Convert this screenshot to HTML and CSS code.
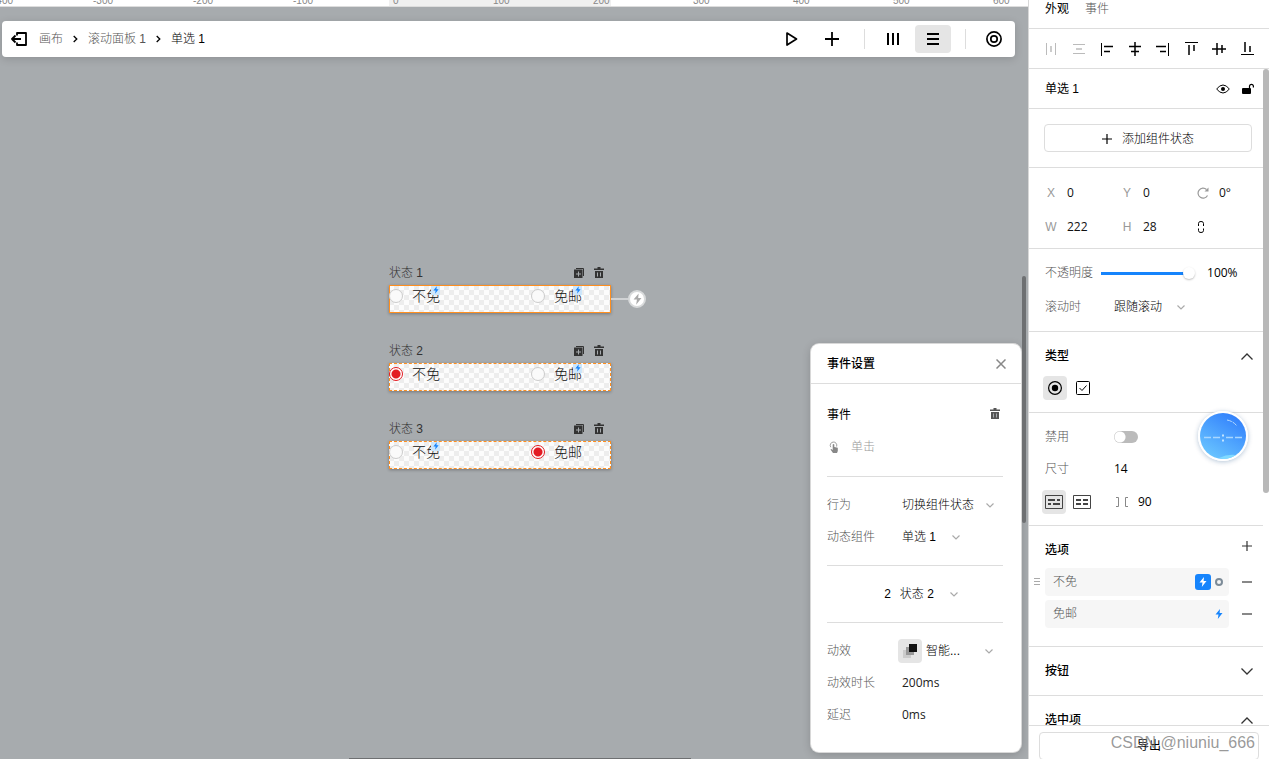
FILE: index.html
```html
<!DOCTYPE html>
<html lang="zh-CN">
<head>
<meta charset="utf-8">
<title>单选 1</title>
<link rel="stylesheet" href="styles.css">
</head>
<body>
<svg class="symbols" aria-hidden="true">
  <symbol id="chev" viewBox="0 0 8 5"><path d="M.5.5 4 4 7.500.5" fill="none" stroke="currentColor" stroke-width="1.200"/></symbol>
  <symbol id="fold" viewBox="0 0 12 7"><path d="M.5.5 6 6 11.500.5" fill="none" stroke="currentColor" stroke-width="1.300"/></symbol>
  <symbol id="bolt" viewBox="0 0 8 10"><path d="M5 0 .5 5.500H3.500L2.800 10 7.500 4H4.600Z" fill="currentColor"/></symbol>
  <symbol id="plus" viewBox="0 0 10 10"><path d="M5 0V10M0 5H10" fill="none" stroke="currentColor" stroke-width="1.200"/></symbol>
  <symbol id="trash" viewBox="0 0 10 12"><path d="M0 1.500H3.500V0H6.500V1.500H10V3H0ZM1 4H9V11H1Z" fill="currentColor"/><path class="slot" d="M3.500 5.500V9.500M6.500 5.500V9.500" fill="none"/></symbol>
  <symbol id="copy" viewBox="0 0 10 10"><path d="M2 .5H9.500V8" fill="none" stroke="currentColor"/><path d="M0 1.500H8.500V10H0Z" fill="currentColor"/><path class="slot" d="M4.500 3.500V8.500M2 6H7" fill="none"/></symbol>
  <symbol id="crumb" viewBox="0 0 5 8"><path d="M.7 1 3.800 4 .7 7" fill="none" stroke="currentColor" stroke-width="1.300"/></symbol>
</svg>

<main class="workspace">
  <div class="ruler">
    <span>-400</span><span>-300</span><span>-200</span><span>-100</span><span>0</span><span>100</span><span>200</span><span>300</span><span>400</span><span>500</span><span>600</span>
  </div>

  <header class="toolbar">
    <button class="tool exit" aria-label="退出"><svg width="16" height="14" viewBox="0 0 16 14"><path d="M6 3.500V1H15V13H6V10.500M1 7H10M4.500 3.500 1 7 4.500 10.500" fill="none" stroke="currentColor" stroke-width="1.800" stroke-linejoin="round"/></svg></button>
    <nav class="crumbs">
      <a href="#">画布</a><svg width="5" height="8"><use href="#crumb"/></svg>
      <a href="#">滚动面板 1</a><svg width="5" height="8"><use href="#crumb"/></svg>
      <a href="#" class="here">单选 1</a>
    </nav>
    <div class="tools">
      <button class="tool" aria-label="播放"><svg width="14" height="16" viewBox="0 0 14 16"><path d="M2 2 11.500 8 2 14Z" fill="none" stroke="currentColor" stroke-width="1.700" stroke-linejoin="round"/></svg></button>
      <button class="tool" aria-label="添加"><svg width="14" height="14" viewBox="0 0 14 14"><path d="M7 0V14M0 7H14" stroke="currentColor" stroke-width="1.800"/></svg></button>
      <i class="divider"></i>
      <button class="tool" aria-label="横向排列"><svg width="14" height="14" viewBox="0 0 14 14"><path d="M2 1V13M7 1V13M12 1V13" stroke="currentColor" stroke-width="2"/></svg></button>
      <button class="tool active" aria-label="纵向排列"><svg width="14" height="14" viewBox="0 0 14 14"><path d="M1 2H13M1 7H13M1 12H13" stroke="currentColor" stroke-width="2"/></svg></button>
      <i class="divider"></i>
      <button class="tool last" aria-label="定位"><svg width="16" height="16" viewBox="0 0 16 16" fill="none" stroke="currentColor"><circle cx="8" cy="8" r="7.100" stroke-width="1.700"/><circle cx="8" cy="8" r="3.200" stroke-width="1.700"/></svg></button>
    </div>
  </header>

  <section class="board board-1 selected">
    <div class="board-head"><span>状态 1</span><button aria-label="复制"><svg width="10" height="10"><use href="#copy"/></svg></button><button aria-label="删除"><svg width="10" height="12"><use href="#trash"/></svg></button></div>
    <div class="frame">
      <label class="choice"><input type="radio" name="s1">不免<i class="badge"><svg width="6" height="8"><use href="#bolt"/></svg></i></label>
      <label class="choice"><input type="radio" name="s1">免邮<i class="badge"><svg width="6" height="8"><use href="#bolt"/></svg></i></label>
    </div>
    <div class="link"><i></i><button aria-label="添加事件"><svg width="9" height="12"><use href="#bolt"/></svg></button></div>
  </section>
  <section class="board board-2">
    <div class="board-head"><span>状态 2</span><button aria-label="复制"><svg width="10" height="10"><use href="#copy"/></svg></button><button aria-label="删除"><svg width="10" height="12"><use href="#trash"/></svg></button></div>
    <div class="frame">
      <label class="choice"><input type="radio" name="s2" checked>不免</label>
      <label class="choice"><input type="radio" name="s2">免邮<i class="badge"><svg width="6" height="8"><use href="#bolt"/></svg></i></label>
    </div>
  </section>
  <section class="board board-3">
    <div class="board-head"><span>状态 3</span><button aria-label="复制"><svg width="10" height="10"><use href="#copy"/></svg></button><button aria-label="删除"><svg width="10" height="12"><use href="#trash"/></svg></button></div>
    <div class="frame">
      <label class="choice"><input type="radio" name="s3">不免<i class="badge"><svg width="6" height="8"><use href="#bolt"/></svg></i></label>
      <label class="choice"><input type="radio" name="s3" checked>免邮</label>
    </div>
  </section>

  <section class="events">
    <header><h2>事件设置</h2><button aria-label="关闭"><svg width="10" height="10" viewBox="0 0 10 10"><path d="M.5.5 9.500 9.500M9.500.5.5 9.500" stroke="currentColor" stroke-width="1.500"/></svg></button></header>
    <div class="group first">
      <div class="row spread"><span class="strong">事件</span><button aria-label="删除事件"><svg width="10" height="12"><use href="#trash"/></svg></button></div>
      <div class="row trigger"><svg width="12" height="12" viewBox="0 0 12 12"><path d="M2.800 6.200A3.300 3.300 0 1 1 8.600 5.500" fill="none" stroke="currentColor" stroke-width=".8"/><path d="M4.700 3.500Q5.500 2.500 6.300 3.500V6L9.800 6.800V10L9 12H5L2.500 8.500 3.300 8 4.700 9Z" fill="currentColor"/></svg><span>单击</span></div>
    </div>
    <div class="group">
      <div class="row"><label for="act">行为</label><span class="pick"><select id="act"><option>切换组件状态</option></select><svg width="8" height="5"><use href="#chev"/></svg></span></div>
      <div class="row"><label for="cmp">动态组件</label><span class="pick wide-gap"><select id="cmp"><option>单选 1</option></select><svg width="8" height="5"><use href="#chev"/></svg></span></div>
    </div>
    <div class="group">
      <div class="row target"><span>2</span><span class="pick"><select aria-label="目标状态"><option>状态 2</option></select><svg width="8" height="5"><use href="#chev"/></svg></span></div>
    </div>
    <div class="group">
      <div class="row"><label for="fx">动效</label><span class="pick fx"><svg class="fx-icon" width="24" height="24" viewBox="0 0 24 24"><path d="M5 11h8v8H5z" fill="#ccc"/><path d="M8 8h8v8H8z" fill="#999"/><path d="M11 5h8v8h-8z" fill="#111"/></svg><select id="fx"><option>智能...</option></select><svg width="8" height="5"><use href="#chev"/></svg></span></div>
      <div class="row"><label for="dur">动效时长</label><input id="dur" value="200ms"></div>
      <div class="row"><label for="delay">延迟</label><input id="delay" value="0ms"></div>
    </div>
  </section>
  <i class="vbar"></i><i class="hbar"></i>
</main>

<aside class="inspector">
  <nav class="tabs"><button class="on">外观</button><button>事件</button></nav>
  <div class="aligns">
    <button class="off" aria-label="水平分布"><svg viewBox="0 0 14 14"><path d="M2.500 1V13M11.500 1V13"/><path d="M7 4V10" stroke-width="1.500"/></svg></button>
    <button class="off" aria-label="垂直分布"><svg viewBox="0 0 14 14"><path d="M1 2.500H13M1 11.500H13"/><path d="M4 7H10" stroke-width="1.500"/></svg></button>
    <button aria-label="左对齐"><svg viewBox="0 0 14 14"><path d="M1.500 1V14"/><path d="M4 4.500H13M4 9.500H10" stroke-width="1.500"/></svg></button>
    <button aria-label="水平居中"><svg viewBox="0 0 14 14"><path d="M7 0V14M1 4.500H13M3 9.500H11" stroke-width="1.500"/></svg></button>
    <button aria-label="右对齐"><svg viewBox="0 0 14 14"><path d="M12.500 1V14"/><path d="M0 4.500H10M4 9.500H10" stroke-width="1.500"/></svg></button>
    <button aria-label="顶对齐"><svg viewBox="0 0 14 14"><path d="M1 .5H14"/><path d="M5 3V13M10 3V9" stroke-width="1.500"/></svg></button>
    <button aria-label="垂直居中"><svg viewBox="0 0 14 14"><path d="M0 7H14M5 1V13M10 3V11" stroke-width="1.500"/></svg></button>
    <button aria-label="底对齐"><svg viewBox="0 0 14 14"><path d="M1 12.500H14"/><path d="M5 0V10M10 4V10" stroke-width="1.500"/></svg></button>
  </div>
  <div class="scroller">
    <div class="props">
      <section class="name"><span>单选 1</span>
        <button aria-label="可见"><svg width="14" height="10" viewBox="0 0 14 10"><path d="M.7 5Q3.500 1 7 1T13.300 5Q10.500 9 7 9T.7 5Z" fill="none" stroke="currentColor"/><circle cx="7" cy="5" r="2" fill="currentColor"/></svg></button>
        <button aria-label="解锁"><svg width="12" height="12" viewBox="0 0 12 12"><rect y="5" width="9" height="6" rx="1" fill="currentColor"/><path d="M7.500 5V3A2 2 0 0 1 11.400 3V4.500" fill="none" stroke="currentColor" stroke-width="1.200"/></svg></button>
      </section>
      <section class="add"><button><svg width="10" height="10"><use href="#plus"/></svg>添加组件状态</button></section>
      <section class="geometry">
        <label><span>X</span><input value="0"></label>
        <label><span>Y</span><input value="0"></label>
        <label><span><svg width="13" height="12" viewBox="0 0 13 12"><path d="M10.500 8.500A5 5 0 1 1 9.500 2.500" fill="none" stroke="currentColor" stroke-width="1.200"/><path d="M7.500 4.500H11.500V.5Z" fill="currentColor"/></svg></span><input value="0°" aria-label="旋转"></label>
        <label><span>W</span><input value="222"></label>
        <label><span>H</span><input value="28"></label>
        <button aria-label="锁定比例"><svg width="8" height="12" viewBox="0 0 8 12"><path d="M1.500 5V2.500A2 2 0 0 1 3 .6H5A2 2 0 0 1 6.500 2.500V5M1.500 7.500V9.500A2 2 0 0 0 3 11.400H5A2 2 0 0 0 6.500 9.500V7.500" fill="none" stroke="currentColor"/></svg></button>
      </section>
      <section class="opacity">
        <div class="prop"><label for="op">不透明度</label><input id="op" type="range" value="100"><input class="percent" value="100%" aria-label="不透明度数值"></div>
        <div class="prop"><label for="scroll" class="key">滚动时</label><span class="pick"><select id="scroll"><option>跟随滚动</option></select><svg width="8" height="5"><use href="#chev"/></svg></span></div>
      </section>
      <section class="kind">
        <div class="title"><h3>类型</h3><button aria-label="收起"><svg class="up" width="12" height="7"><use href="#fold"/></svg></button></div>
        <div class="toggles"><button class="active" aria-label="单选"><svg width="16" height="16" viewBox="0 0 16 16"><circle cx="8" cy="8" r="6.400" fill="none" stroke="currentColor" stroke-width="1.200"/><circle cx="8" cy="8" r="3.200" fill="currentColor"/></svg></button><button aria-label="多选"><svg width="16" height="16" viewBox="0 0 16 16" fill="none" stroke="currentColor"><rect x="1.500" y="1.500" width="13" height="13" rx="1"/><path d="M4.500 8 7 10.500 11.500 5.500"/></svg></button></div>
      </section>
      <section class="size">
        <div class="prop"><label for="dis" class="key">禁用</label><input id="dis" class="switch" type="checkbox"></div>
        <div class="prop"><label for="sz" class="key">尺寸</label><input id="sz" value="14"></div>
        <div class="prop layout">
          <button class="active" aria-label="紧凑"><svg width="18" height="14" viewBox="0 0 18 14" fill="none" stroke="currentColor"><path d="M.5.5H17.500V13.500H.5Z"/><path d="M3 5H10M12 5H15M3 9H6M8 9H15" stroke-width="2"/></svg></button>
          <button aria-label="等宽"><svg width="18" height="14" viewBox="0 0 18 14" fill="none" stroke="currentColor"><path d="M.5.5H17.500V13.500H.5Z"/><path d="M3 5H8M10 5H15M3 9H8M10 9H15" stroke-width="2"/></svg></button>
          <label for="gap"><svg width="12" height="10" viewBox="0 0 12 10" fill="none" stroke="currentColor"><path d="M0 .5H2.500V9.500H0M12 .5H9.500V9.500H12"/></svg></label><input id="gap" value="90" aria-label="间距">
        </div>
      </section>
      <section class="options">
        <div class="title"><h3>选项</h3><button aria-label="添加选项"><svg width="10" height="10"><use href="#plus"/></svg></button></div>
        <div class="option"><svg class="grip" width="6" height="8" viewBox="0 0 6 8"><path d="M0 .5H6M0 3.500H6M0 6.500H6" stroke="#aaa"/></svg><div class="field"><input value="不免" aria-label="选项一"><button class="event on" aria-label="事件"><svg width="8" height="10"><use href="#bolt"/></svg></button><svg width="8" height="8" viewBox="0 0 8 8"><circle cx="4" cy="4" r="3" fill="none" stroke="#7c8b98" stroke-width="2"/></svg></div><button class="minus" aria-label="移除"></button></div>
        <div class="option"><svg class="grip" width="6" height="8"></svg><div class="field"><input value="免邮" aria-label="选项二"><button class="event" aria-label="事件"><svg width="8" height="10"><use href="#bolt"/></svg></button></div><button class="minus" aria-label="移除"></button></div>
      </section>
      <section class="fold"><div class="title"><h3>按钮</h3><button aria-label="展开"><svg width="12" height="7"><use href="#fold"/></svg></button></div></section>
      <section class="fold"><div class="title"><h3>选中项</h3><button aria-label="收起"><svg class="up" width="12" height="7"><use href="#fold"/></svg></button></div></section>
    </div>
    <i class="thumb"></i>
  </div>
  <footer><button>导出</button></footer>
  <div class="ball"><svg width="46" height="46" viewBox="0 0 46 46"><defs><linearGradient id="sky" x1=".2" y1="1" x2=".8" y2="0"><stop offset="0" stop-color="#6cc8ff"/><stop offset="1" stop-color="#2f7dfc"/></linearGradient></defs><circle cx="23" cy="23" r="23" fill="url(#sky)"/><path d="M4 24.500H11M13 24.500H20M26 24.500H33M35 24.500H42" stroke="#a8d6ff" stroke-width="1.500"/><path d="M22 21.500h2v2h-2zM22 26.500h2v2h-2z" fill="#c2e4ff"/><path d="M27 7Q33 8 37 13" fill="none" stroke="#b8dcff" stroke-dasharray="5 1"/><path d="M19 45Q27 41 36 42 30 46 23 46Z" fill="#80daff"/></svg></div>
  <div class="mark">CSDN @niuniu_666</div>
</aside>
</body>
</html>
```

FILE: styles.css
```css
* { box-sizing: border-box; }
body {
  margin: 0;
  height: 100vh;
  display: flex;
  overflow: hidden;
  font: 300 12px/20px "Liberation Sans", "Noto Sans CJK SC", sans-serif;
  color: #000;
}
button, input, select { font: inherit; color: inherit; background: none; border: 0; padding: 0; margin: 0; outline: 0; border-radius: 0; }
button { display: flex; align-items: center; justify-content: center; }
input { min-width: 0; }
select { appearance: none; }
a { color: inherit; text-decoration: none; }
h2, h3 { margin: 0; font-size: 12px; font-weight: 500; }
svg { display: block; flex: none; }
.symbols { position: absolute; width: 0; height: 0; }

/* workspace */
.workspace { position: relative; flex: 1; min-width: 0; background: #a7abae; overflow: hidden; }
.ruler {
  display: flex;
  align-items: flex-end;
  height: 7px;
  overflow: hidden;
  border-bottom: 1px solid #ddd;
  background: linear-gradient(90deg, #fff 389px, #f0f0f0 389px, #f0f0f0 611px, #fff 611px);
  font-size: 10px;
  line-height: 10px;
  color: #888;
}
.ruler span { flex: none; width: 100px; }
.ruler span:first-child { margin-left: -7px; }

.toolbar {
  display: flex;
  align-items: center;
  height: 36px;
  margin: 14px 13px 0 2px;
  background: #fff;
  border-radius: 4px;
  box-shadow: 0 2px 8px rgba(0, 0, 0, .15);
}
.exit { margin-left: 9px; }
.crumbs { display: flex; align-items: center; gap: 10px; margin-left: 12px; color: #555; }
.crumbs svg, .crumbs .here { color: #000; }
.tools { display: flex; align-items: center; margin-left: auto; }
.tools .tool { width: 36px; height: 28px; margin: 0 2px; border-radius: 4px; }
.tools .last { margin-right: 3px; }
.tools .active, .toggles .active, .layout .active { background: #e5e5e5; }
.divider { width: 1px; height: 20px; margin: 0 8px 0 12px; background: #ddd; }

.board { position: absolute; left: 389px; width: 222px; }
.board-1 { top: 262px; }
.board-2 { top: 340px; }
.board-3 { top: 418px; }
.board-head { display: flex; align-items: center; gap: 10px; height: 23px; padding: 0 7px 2px 0; color: #333; }
.board-head span { margin-right: auto; }
.slot { stroke: #a7abae; stroke-width: 1px; }
.events .slot { stroke: #fff; }
.frame {
  display: flex;
  gap: 90px;
  height: 28px;
  outline: 1px dashed #ff8f1f;
  outline-offset: -1px;
  background: repeating-conic-gradient(#ededed 0 25%, #fcfcfc 0 50%) 0 0 / 10px 10px;
  box-shadow: 0 1px 3px rgba(0, 0, 0, .3);
}
.selected .frame { outline-style: solid; }
.choice { position: relative; display: flex; align-items: center; gap: 9px; width: 52px; height: 22px; font-size: 14px; white-space: nowrap; color: #111; }
.choice input { appearance: none; flex: none; width: 14px; height: 14px; border: 1px solid #ccc; border-radius: 50%; background: #fafafa; }
.choice input:checked { border-color: #e31b23; background: radial-gradient(circle, #e31b23 4px, #fff 5px); }
.badge { position: absolute; top: 1px; right: 1px; display: flex; justify-content: center; width: 9px; height: 9px; background: #cde6fb; color: #1684fc; }
.link { position: absolute; left: 222px; top: 28px; display: flex; align-items: center; }
.link i { width: 17px; height: 2px; background: #d0d2d4; }
.link button { width: 18px; height: 18px; border: 2px solid #d8dadb; border-radius: 50%; background: #fff; color: #aaa; }

.events { position: absolute; right: 7px; bottom: 7px; width: 210px; padding-bottom: 21px; background: #fff; border-radius: 8px; box-shadow: 0 0 0 1px #d8d8d8, 0 2px 10px rgba(0, 0, 0, .2); }
.events header { display: flex; align-items: center; justify-content: space-between; height: 40px; padding: 0 15px 0 16px; border-bottom: 1px solid #ddd; }
.events header button { color: #888; }
.group { margin: 0 18px 0 16px; padding: 12px 0; }
.group + .group { border-top: 1px solid #ddd; }
.group.first { padding: 15px 0 13px; }
.group:last-child { padding-bottom: 0; }
.row { display: flex; align-items: center; height: 32px; }
.row label { width: 75px; color: #555; }
.row input { width: 80px; font-family: "Open Sans", sans-serif; font-weight: 400; color: #222; }
.spread { justify-content: space-between; }
.spread button { margin-right: 3px; padding-bottom: 2px; color: #555; }
.strong { font-weight: 400; }
.trigger { gap: 11px; padding-left: 1px; color: #999; }
.trigger svg { color: #888; }
.pick { display: flex; align-items: center; gap: 11px; }
.pick > svg:last-child { color: #aaa; }
.wide-gap { gap: 15px; }
.target { justify-content: center; gap: 9px; padding-left: 12px; }
.target .pick { gap: 15px; }
.fx { flex: 1; gap: 4px; margin-left: -4px; }
.fx-icon { border-radius: 4px; background: #e5e5e5; }
.fx > svg:last-child { margin: 0 10px 0 auto; }
.vbar { position: absolute; right: 2px; top: 276px; width: 4px; height: 247px; border-radius: 2px; background: #6e7072; }
.hbar { position: absolute; left: 349px; bottom: 0; width: 342px; height: 1px; background: #6e7072; }

/* inspector */
.inspector { position: relative; display: flex; flex-direction: column; flex: none; width: 241px; height: 100vh; border-left: 1px solid #d8d8d8; background: #fff; }
.tabs { display: flex; gap: 16px; height: 29px; padding: 0 16px 11px; border-bottom: 1px solid #ddd; }
.tabs button { color: #555; }
.tabs .on { color: #000; font-weight: 400; }
.aligns { display: flex; justify-content: space-between; align-items: center; height: 40px; padding: 0 15px; border-bottom: 1px solid #ddd; }
.aligns svg { width: 14px; height: 14px; fill: none; stroke: currentColor; }
.aligns .off { color: #bbb; }
.scroller { display: flex; flex: 1; min-height: 0; overflow: hidden; }
.props { flex: 1; min-width: 0; }
.thumb { width: 6px; height: 424px; border-radius: 3px; background: #b8b8b8; }
.props section { border-bottom: 1px solid #ddd; }
.props input { font-family: "Open Sans", "Noto Sans CJK SC", sans-serif; font-weight: 400; }
.name { display: flex; align-items: center; gap: 12px; height: 40px; padding: 0 9px 0 16px; font-weight: 400; }
.name span { margin-right: auto; }
.add { padding: 15px 11px 15px 15px; }
.add button { gap: 10px; width: 100%; height: 28px; padding-top: 2px; border: 1px solid #ddd; border-radius: 4px; }
.geometry { display: grid; grid-template-columns: repeat(3, 76px); grid-auto-rows: 34px; padding: 8px 0 4px 16px; }
.geometry label { display: flex; align-items: center; gap: 10px; color: #999; }
.geometry span { display: flex; justify-content: center; width: 12px; }
.geometry input { width: 36px; color: #111; }
.geometry button { justify-self: start; }
.opacity { padding: 7px 0 7px 16px; }
.prop { display: flex; align-items: center; height: 34px; color: #555; }
.prop select, .prop input { color: #000; }
.prop .key { flex: none; width: 69px; }
.prop .pick { gap: 14px; }
.prop [type="range"] { appearance: none; width: 94px; height: 12px; margin-left: 8px; }
[type="range"]::-webkit-slider-runnable-track { height: 12px; background: linear-gradient(#1684fc, #1684fc) 0 50% / 84px 3px no-repeat; }
[type="range"]::-webkit-slider-thumb { appearance: none; width: 12px; height: 12px; border-radius: 50%; background: #fff; box-shadow: 0 1px 2px rgba(0, 0, 0, .25); }
.prop .percent { width: 40px; margin-left: 12px; }
.title { display: flex; align-items: center; justify-content: space-between; height: 48px; padding: 0 10px 0 16px; }
.title svg { color: #333; }
.up { transform: scaleY(-1); }
.kind { padding-bottom: 12px; }
.kind .title { height: 44px; padding-top: 4px; }
.toggles { display: flex; gap: 4px; padding-left: 14px; }
.toggles button, .layout button { flex: none; width: 24px; height: 24px; border-radius: 4px; }
.size { padding: 8px 0 8px 16px; }
.size .prop { height: 32px; }
.switch { appearance: none; width: 24px; height: 12px; border-radius: 6px; background: radial-gradient(circle at 6px 6px, #fff 5px, #bbb 6px); }
.size .layout { padding-top: 1px; margin-left: -3px; }
.layout button { color: #444; }
.layout button:first-child { margin-right: 4px; }
.layout label { flex: none; margin: 0 10px 0 22px; color: #888; }
.options { padding-bottom: 18px; }
.options .title { height: 42px; padding: 6px 11px 0 16px; }
.options .title button { padding-bottom: 9px; }
.option { display: flex; align-items: center; height: 28px; margin-bottom: 4px; padding: 0 11px 0 5px; }
.options .option:last-child { margin-bottom: 0; }
.field { flex: 1; display: flex; align-items: center; gap: 4px; height: 28px; min-width: 0; margin: 0 13px 0 5px; padding: 0 6px 0 8px; border-radius: 4px; background: #f6f6f6; }
.field input { flex: 1; font-weight: 300; color: #555; }
.event { color: #1684fc; }
.event.on { width: 16px; height: 16px; border-radius: 3px; background: #1684fc; color: #fff; }
.minus { width: 10px; height: 2px; background: #888; }
.props .fold { height: 49px; }
.inspector footer { height: 34px; padding: 6px 10px 0; border-top: 1px solid #ddd; flex: none; }
.inspector footer button { width: 100%; height: 28px; border: 1px solid #ddd; border-radius: 4px; font-weight: 400; }
.ball { position: absolute; right: 21px; top: 411px; width: 50px; height: 50px; border: 2px solid #fff; border-radius: 50%; box-shadow: 0 1px 5px rgba(0, 60, 120, .3); }
.mark { position: absolute; right: 14px; bottom: 6px; font: 400 16px/20px "Liberation Sans", sans-serif; color: rgba(120, 120, 120, .75); }
```
